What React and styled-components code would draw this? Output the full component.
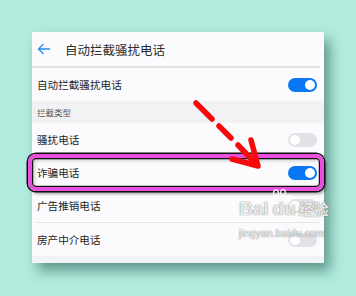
import React from "react"
import styled, { createGlobalStyle } from "styled-components"

const Global = createGlobalStyle`
  html, body {
    margin: 0;
    padding: 0;
    background: #b1ecdf;
  }
  body {
    font-family: "Noto Sans CJK SC", "Noto Sans", sans-serif;
  }
`

const Stage = styled.div`
  position: relative;
  width: 356px;
  height: 296px;
  overflow: hidden;
  padding: 32px 0 0 32px;
  box-sizing: border-box;
`

const Panel = styled.div`
  width: 292px;
  background: #fbfbfd;
  box-shadow: 6px 8px 12px rgba(20, 70, 60, 0.5);
  padding-bottom: 7px;
  position: relative;
  &:after {
    content: "";
    display: block;
    height: 7px;
    background: #f3f3f5;
    position: absolute;
    left: 0;
    right: 0;
    bottom: 0;
  }
`

const Header = styled.div`
  display: flex;
  align-items: center;
  height: 34px;
  border-bottom: 2px solid #e2e2e5;
  margin-right: 4px;
  padding-left: 5px;
`

const Back = styled.svg`
  width: 14px;
  height: 12px;
  margin-right: 14px;
`

const Title = styled.div`
  font-size: 12.5px;
  color: #2c2c2c;
`

const Row = styled.div`
  position: relative;
  display: flex;
  align-items: center;
  justify-content: space-between;
  height: 33px;
  border-bottom: ${p => (p.$divider ? "1px solid #e4e4e7" : "none")};
  margin: 0 ${p => (p.$divider ? "4px" : "0")};
  padding: 0 ${p => (p.$divider ? "3px 0 1px" : "7px 0 5px")};
`

const Label = styled.span`
  font-size: 10.6px;
  color: #1e1e1e;
`

const Section = styled.div`
  height: 22px;
  display: flex;
  align-items: center;
  padding-left: 5px;
  background: #f2f2f4;
  font-size: 8.5px;
  color: #555;
`

const Toggle = styled.div`
  width: 29px;
  height: 14px;
  border-radius: 7px;
  background: ${p => (p.$on ? "#0a78f2" : "#e2e1e5")};
  position: relative;
  &:after {
    content: "";
    position: absolute;
    top: 2px;
    left: ${p => (p.$on ? "17px" : "2px")};
    width: 10px;
    height: 10px;
    border-radius: 50%;
    background: #fff;
  }
`

const Highlight = styled.div`
  position: absolute;
  left: -4px;
  right: 0px;
  top: -2px;
  bottom: -2px;
  border: 4px solid #e94fdd;
  border-radius: 8px;
  box-shadow: 0 0 0 1.5px #111, inset 0 0 0 1.2px #111,
    inset 2px 2px 4px rgba(0, 0, 0, 0.25), 2px 3px 3px rgba(0, 0, 0, 0.35);
  pointer-events: none;
`

const Arrow = styled.svg`
  position: absolute;
  left: 0;
  top: 0;
  width: 356px;
  height: 296px;
  pointer-events: none;
`

const Mark = styled.div`
  position: absolute;
  left: 239px;
  top: 199px;
  color: rgba(255, 255, 255, 0.85);
  font-family: "Liberation Sans", Arial, sans-serif;
  text-shadow: 0 0 1px rgba(90, 90, 90, 0.7), 0 0 1px rgba(90, 90, 90, 0.5);
`

const Logo = styled.div`
  display: flex;
  align-items: baseline;
  font-size: 19px;
  font-weight: bold;
  line-height: 20px;
`

const Du = styled.span`
  position: relative;
  margin-left: 4px;
`

const Cn = styled.span`
  font-family: "Noto Sans CJK SC", sans-serif;
  font-size: 15px;
  margin-left: 3px;
`

const Url = styled.div`
  font-size: 10px;
  margin-top: 9px;
  letter-spacing: 0.3px;
`

const PawSvg = styled.svg`
  position: absolute;
  left: -5px;
  top: -10px;
`

const Paw = () => (
  <PawSvg width="26" height="16" viewBox="0 0 26 16">
    <g fill="none" stroke="rgba(255,255,255,0.85)" strokeWidth="1.5">
      <ellipse cx="8" cy="4" rx="2.4" ry="3" />
      <ellipse cx="15" cy="3.5" rx="2.4" ry="3" />
      <ellipse cx="3" cy="10" rx="2" ry="2.6" />
      <ellipse cx="21" cy="9" rx="2" ry="2.6" />
    </g>
  </PawSvg>
)

export default function App() {
  return (
    <Stage>
      <Global />
      <Panel>
        <Header>
          <Back viewBox="0 0 14 12">
            <path d="M13 6H1.5M6.5 1L1.5 6l5 5" fill="none" stroke="#2d8cf0" strokeWidth="1.3" />
          </Back>
          <Title>自动拦截骚扰电话</Title>
        </Header>
        <Row>
          <Label>自动拦截骚扰电话</Label>
          <Toggle $on />
        </Row>
        <Section>拦截类型</Section>
        <Row>
          <Label>骚扰电话</Label>
          <Toggle />
        </Row>
        <Row>
          <Label>诈骗电话</Label>
          <Toggle $on />
          <Highlight />
        </Row>
        <Row $divider>
          <Label>广告推销电话</Label>
          <Toggle />
        </Row>
        <Row>
          <Label>房产中介电话</Label>
          <Toggle />
        </Row>
      </Panel>

      <Arrow viewBox="0 0 356 296">
        <g stroke="#f60a0a" strokeWidth="5.5" strokeLinecap="round" fill="none">
          <line x1="196" y1="103" x2="212" y2="119" />
          <line x1="219" y1="126" x2="231" y2="138" />
          <line x1="238" y1="145" x2="256" y2="164" />
          <polyline points="251,140 258,166 232,159" strokeLinejoin="round" />
        </g>
      </Arrow>

      <Mark>
        <Logo>
          Bai<Du><Paw />du</Du><Cn>经验</Cn>
        </Logo>
        <Url>jingyan.baidu.com</Url>
      </Mark>
    </Stage>
  )
}
